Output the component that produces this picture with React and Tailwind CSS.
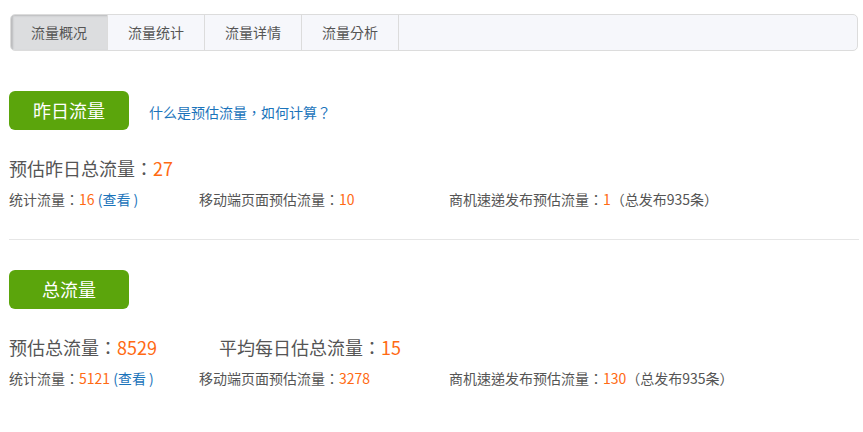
import React from 'react';

const tabs = ['流量概况', '流量统计', '流量详情', '流量分析'];

const Num = ({ children }) => <span className="text-[#ff6a13]">{children}</span>;

const Section = ({ title, showHelp, totals, stat, mobile, biz }) => (
    <div>
        <div className="flex items-center">
            <div className="w-[120px] h-[39px] rounded-[6px] bg-[#5ba50c] text-white text-[18px] flex items-center justify-center">
                {title}
            </div>
            {showHelp && (
                <a className="ml-[20px] mt-[4px] text-[14px] text-[#1b74bb]">什么是预估流量，如何计算？</a>
            )}
        </div>
        <div className="flex mt-[26px] text-[18px] leading-[24px] text-[#555]">
            {totals.map((t, i) => (
                <div key={i} className={i === 0 ? 'w-[210px]' : ''}>
                    {t.label}：<Num>{t.value}</Num>
                </div>
            ))}
        </div>
        <div className="flex mt-[10px] text-[14px] leading-[18px] text-[#555]">
            <div className="w-[190px]">
                统计流量：<Num>{stat}</Num> <span className="text-[#1b74bb]">(查看 )</span>
            </div>
            <div className="w-[250px]">
                移动端页面预估流量：<Num>{mobile}</Num>
            </div>
            <div>
                商机速递发布预估流量：<Num>{biz}</Num>（总发布935条）
            </div>
        </div>
    </div>
);

const App = () => {
    return (
        <div className="w-[863px] h-[432px] bg-white font-['Noto_Sans_CJK_TC','Liberation_Sans',sans-serif]">
            <div className="pt-[14px] pl-[10px] pr-[5px]">
                <div className="flex h-[37px] border border-[#dcdcdc] rounded-[5px] bg-[#f6f7fb] overflow-hidden">
                    {tabs.map((t, i) => (
                        <div
                            key={t}
                            className={
                                'w-[97px] flex items-center justify-center text-[14px] text-[#555] border-r border-[#dcdcdc] ' +
                                (i === 0 ? 'bg-[#dcdddf] shadow-[inset_2px_1px_2px_rgba(0,0,0,0.15)]' : '')
                            }
                        >
                            {t}
                        </div>
                    ))}
                </div>
            </div>
            <div className="pl-[9px] pr-[4px] pt-[40px]">
                <Section
                    title="昨日流量"
                    showHelp
                    totals={[{ label: '预估昨日总流量', value: '27' }]}
                    stat="16"
                    mobile="10"
                    biz="1"
                />
                <div className="h-px bg-[#e6e6e6] mt-[31px] mb-[30px]" />
                <Section
                    title="总流量"
                    totals={[
                        { label: '预估总流量', value: '8529' },
                        { label: '平均每日估总流量', value: '15' },
                    ]}
                    stat="5121"
                    mobile="3278"
                    biz="130"
                />
            </div>
        </div>
    );
};

export default App;
